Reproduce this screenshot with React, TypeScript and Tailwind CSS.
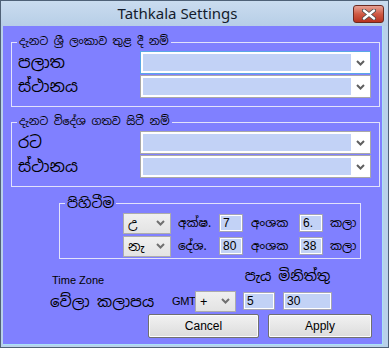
import React from "react";

const SI = { fontFamily: '"Noto Sans Sinhala", "Iskoola Pota", "Noto Serif Sinhala", "Noto Sans", sans-serif' };
const LS = { fontFamily: '"Liberation Sans", Arial, sans-serif' };

function Chevron({ color = "#5f5f5f" }: { color?: string }) {
  return (
    <svg width="9" height="6" viewBox="0 0 9 6">
      <path d="M1 1 L4.5 4.5 L8 1" fill="none" stroke={color} strokeWidth="2" />
    </svg>
  );
}

function BigSelect({ focused = false }: { focused?: boolean }) {
  return (
    <div
      className={`w-[231px] h-[23px] border bg-white p-[2px] flex ${
        focused ? "border-[#5aa7e6]" : "border-[#a8a8a8]"
      }`}
    >
      <div className="flex-1 bg-[#c2d2f6]" />
      <div className="w-[17px] flex items-center justify-end pr-[3px]">
        <Chevron />
      </div>
    </div>
  );
}

function SmallSelect({ value, w }: { value: string; w: string }) {
  return (
    <div
      className={`${w} h-[21px] border border-[#acacac] bg-gradient-to-b from-[#f0f0f0] to-[#e3e3e3] flex items-center justify-between pl-[4px] pr-[5px]`}
    >
      <span className="text-[13px] leading-none text-black" style={SI}>
        {value}
      </span>
      <Chevron color="#707070" />
    </div>
  );
}

function TextBox({ value, w, h = "h-[18px]" }: { value: string; w: string; h?: string }) {
  return (
    <div className={`${w} ${h} border border-[#a4a4b4] bg-white p-[1px]`}>
      <div className="w-full h-full bg-[#c2d2f6] flex items-center pl-[2px] text-[12px] text-black" style={LS}>
        {value}
      </div>
    </div>
  );
}

function Group({
  legend,
  children,
  className,
  legendClass,
}: {
  legend: string;
  children: React.ReactNode;
  className: string;
  legendClass: string;
}) {
  return (
    <div className={`relative border border-[#e2e2fb] ${className}`}>
      <span
        className={`absolute left-[5px] bg-[#8080ff] px-[2px] text-black leading-none whitespace-nowrap ${legendClass}`}
        style={SI}
      >
        {legend}
      </span>
      {children}
    </div>
  );
}

function Row({ label, focused = false }: { label: string; focused?: boolean }) {
  return (
    <div className="flex items-center">
      <div className="w-[122px] text-[16px] leading-none text-black" style={SI}>
        {label}
      </div>
      <BigSelect focused={focused} />
    </div>
  );
}

function Lbl({ text, cls }: { text: string; cls: string }) {
  return (
    <div className={`${cls} text-[12px] leading-none whitespace-nowrap text-black`} style={SI}>
      {text}
    </div>
  );
}

export default function App() {
  return (
    <div className="w-[389px] h-[348px] flex flex-col border border-[#4f6177] bg-[#b9d1ea] overflow-hidden">
      {/* Title bar */}
      <div className="h-[25px] flex items-center relative bg-gradient-to-b from-[#cadcef] to-[#b7cee7]">
        <div className="w-[353px] text-center text-[15px] text-[#141c2c]" style={{ fontFamily: '"Noto Sans", "Open Sans", sans-serif' }}>
          Tathkala Settings
        </div>
        <div className="absolute left-[352px] top-[4px] w-[31px] h-[18px] rounded-[3px] border border-[#6b2a22] bg-gradient-to-b from-[#e6a195] via-[#cf5a45] to-[#b8321f] flex items-center justify-center">
          <svg width="14" height="11" viewBox="0 0 14 11">
            <path d="M2 1.5 L12 9.5 M12 1.5 L2 9.5" stroke="#4a4a4a" strokeWidth="4" strokeLinecap="round" />
            <path d="M2 1.5 L12 9.5 M12 1.5 L2 9.5" stroke="#ffffff" strokeWidth="2.4" strokeLinecap="round" />
          </svg>
        </div>
      </div>

      {/* Body */}
      <div className="flex-1 ml-[2px] mr-[5px] mb-[2px] bg-[#8080ff] flex flex-col border-r border-b border-[#a9e3f7]">
        <Group
          legend="දැනට ශ්‍රී ලංකාව තුළ දී නම්"
          className="ml-[8px] mt-[16px] w-[369px] h-[65px] pl-[6px] pt-[8px]"
          legendClass="-top-[7px] text-[11px]"
        >
          <div className="flex flex-col gap-[1px]">
            <Row label="පලාත" focused />
            <Row label="ස්ථානය" />
          </div>
        </Group>

        <Group
          legend="දැනට විදේශ ගතව සිටී නම්"
          className="ml-[8px] mt-[15px] w-[369px] h-[65px] pl-[6px] pt-[8px]"
          legendClass="-top-[7px] text-[11px]"
        >
          <div className="flex flex-col gap-[1px]">
            <Row label="රට" />
            <Row label="ස්ථානය" />
          </div>
        </Group>

        <Group
          legend="පිහිටීම"
          className="ml-[56px] mt-[16px] w-[302px] h-[56px] pl-[63px] pt-[8px]"
          legendClass="-top-[8px] text-[14px]"
        >
          <div className="flex flex-col gap-[1px]">
            <div className="flex items-center h-[22px]">
              <SmallSelect value="උ" w="w-[48px]" />
              <Lbl text="අක්ෂ." cls="w-[41px] ml-[7px]" />
              <TextBox value="7" w="w-[24px]" />
              <Lbl text="අංශක" cls="w-[48px] ml-[8px]" />
              <TextBox value="6." w="w-[24px]" />
              <Lbl text="කලා" cls="ml-[7px]" />
            </div>
            <div className="flex items-center h-[22px]">
              <SmallSelect value="නැ" w="w-[48px]" />
              <Lbl text="දේශ." cls="w-[41px] ml-[7px]" />
              <TextBox value="80" w="w-[24px]" />
              <Lbl text="අංශක" cls="w-[48px] ml-[8px]" />
              <TextBox value="38" w="w-[24px]" />
              <Lbl text="කලා" cls="ml-[7px]" />
            </div>
          </div>
        </Group>

        {/* Time zone headings */}
        <div className="flex items-end h-[29px] pl-[49px]">
          <div className="w-[190px] text-[11px] leading-none pb-[2px] text-black" style={LS}>
            Time Zone
          </div>
          <div className="w-[91px] flex justify-center pb-[5px]">
            <span className="text-[14px] leading-none whitespace-nowrap text-black" style={SI}>
              පැය මිනිත්තු
            </span>
          </div>
        </div>

        {/* Time zone row */}
        <div className="flex items-center h-[20px] pl-[47px] mt-[3px]">
          <div className="w-[122px] text-[15px] leading-none whitespace-nowrap text-black" style={SI}>
            වේලා කලාපය
          </div>
          <div className="w-[23px] text-[11px] leading-none text-black tracking-[-0.3px]" style={LS}>
            GMT
          </div>
          <SmallSelect value="+" w="w-[41px]" />
          <div className="ml-[7px]">
            <TextBox value="5" w="w-[32px]" />
          </div>
          <div className="ml-[8px]">
            <TextBox value="30" w="w-[49px]" />
          </div>
        </div>

        {/* Buttons */}
        <div className="flex mt-[3px] pl-[145px] gap-[9px]">
          <button className="w-[111px] h-[24px] border border-[#707070] rounded-[2px] bg-gradient-to-b from-[#f2f2f2] to-[#dcdcdc] shadow-[inset_0_0_0_1px_#fcfcfc] text-[12px] text-black" style={LS}>
            Cancel
          </button>
          <button className="w-[104px] h-[24px] border border-[#707070] rounded-[2px] bg-gradient-to-b from-[#f2f2f2] to-[#dcdcdc] shadow-[inset_0_0_0_1px_#fcfcfc] text-[12px] text-black" style={LS}>
            Apply
          </button>
        </div>
      </div>
    </div>
  );
}
